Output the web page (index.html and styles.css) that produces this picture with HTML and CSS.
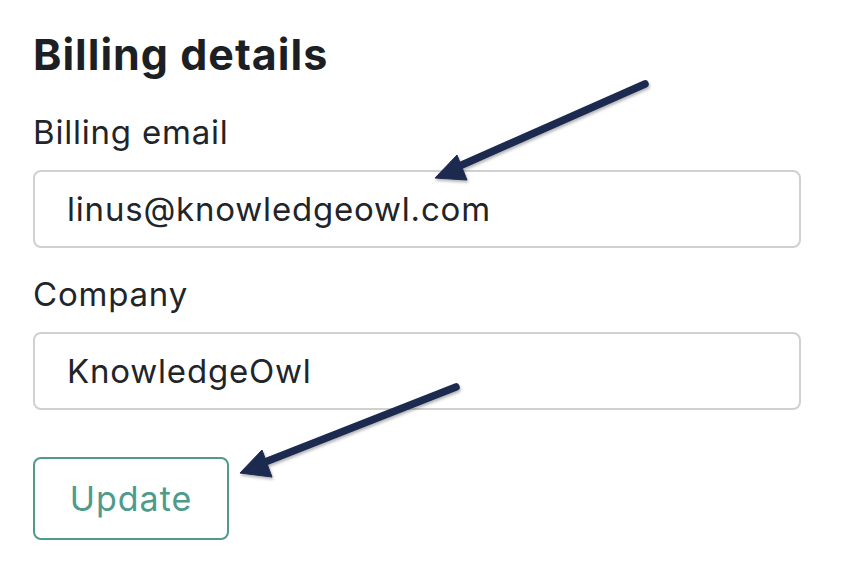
FILE: index.html
```html
<!DOCTYPE html>
<html lang="en">
<head>
<meta charset="utf-8">
<title>Billing details</title>
<link rel="stylesheet" href="styles.css">
</head>
<body>
<main class="page">
  <h2 class="title">Billing details</h2>
  <form class="form">
    <label class="label" for="email">Billing email</label>
    <div class="input" id="email">linus@knowledgeowl.com</div>
    <label class="label label-company" for="company">Company</label>
    <div class="input" id="company">KnowledgeOwl</div>
    <div class="actions"><span class="btn">Update</span></div>
  </form>
  <svg class="arrows" width="857" height="561" viewBox="0 0 857 561" aria-hidden="true">
    <defs>
      <filter id="sh" x="-10%" y="-10%" width="130%" height="140%">
        <feDropShadow dx="1" dy="2" stdDeviation="1.5" flood-color="#000" flood-opacity="0.3"/>
      </filter>
    </defs>
    <g fill="#1e2a50" stroke="#1e2a50" filter="url(#sh)">
      <line x1="645" y1="84" x2="455" y2="168" stroke-width="7.5" stroke-linecap="round"/>
      <polygon points="435,178 457,155 467,180" stroke-width="1" stroke-linejoin="round"/>
      <line x1="456" y1="387" x2="260" y2="464" stroke-width="7.5" stroke-linecap="round"/>
      <polygon points="240,473 262,450 272,477" stroke-width="1" stroke-linejoin="round"/>
    </g>
  </svg>
</main>
</body>
</html>
```
FILE: styles.css
```css
html, body {
  margin: 0;
  padding: 0;
  background: #ffffff;
}
body {
  font-family: Inter, "Noto Sans", "Liberation Sans", sans-serif;
  color: #212529;
}
.page {
  position: relative;
  width: 857px;
  height: 561px;
  box-sizing: border-box;
  padding: 28px 56px 0 33px;
  overflow: hidden;
}
.title {
  margin: 0;
  font-size: 43px;
  line-height: 52px;
  font-weight: 700;
  letter-spacing: 1px;
  color: #1c1f23;
}
.form {
  display: flex;
  flex-direction: column;
  margin-top: 33px;
}
.label {
  display: block;
  font-size: 33px;
  line-height: 38px;
  letter-spacing: 0.8px;
  color: #212529;
}
.label-company {
  margin-top: 27px;
}
.input {
  box-sizing: border-box;
  margin-top: 19px;
  height: 78px;
  width: 768px;
  border: 2px solid #d0d0d0;
  border-radius: 8px;
  padding: 0 32px;
  display: flex;
  align-items: center;
  font-size: 33px;
  letter-spacing: 0.8px;
  color: #212529;
}
.actions {
  margin-top: 47px;
  display: flex;
}
.btn {
  box-sizing: border-box;
  height: 83px;
  width: 196px;
  border: 2px solid #4f9b8b;
  border-radius: 8px;
  display: flex;
  align-items: center;
  justify-content: center;
  font-size: 34px;
  letter-spacing: 1px;
  color: #4f9b8b;
}
.arrows {
  position: absolute;
  left: 0;
  top: 0;
  pointer-events: none;
}
```
